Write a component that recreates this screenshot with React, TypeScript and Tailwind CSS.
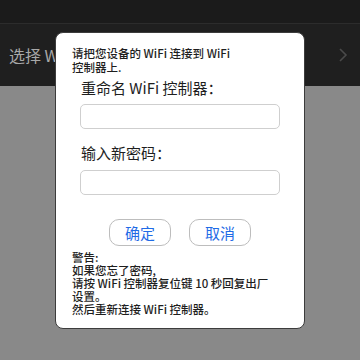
import React from 'react';

const font = { fontFamily: '"Noto Sans CJK SC", "Noto Sans", sans-serif' };

const App: React.FC = () => {
    return (
        <div className="relative w-[360px] h-[360px] overflow-hidden bg-[#898989]" style={font}>
            {/* Header (cut off at top) */}
            <div className="h-[24px] bg-[#1b1b1b] border-b border-[#2c2c2c] overflow-hidden flex items-start gap-[44px] px-[8px]">
                <span className="text-[16px] leading-[16px] -mt-[19px] text-[#8a8a8a]">设置</span>
                <span className="text-[16px] leading-[16px] -mt-[19px] text-[#8a8a8a]">连接控制器网络设置</span>
            </div>

            {/* Row behind dialog */}
            <div className="h-[62px] bg-[#1f1f1f] flex items-center justify-between pl-[9px] pr-[12px]">
                <span className="text-[16px] text-[#a8a8a8]">选择 WiFi 控制器</span>
                <svg width="10" height="16" viewBox="0 0 10 16" fill="none">
                    <path d="M2 2l6 6-6 6" stroke="#4a4a4a" strokeWidth="1.6" />
                </svg>
            </div>

            {/* Dialog */}
            <div className="absolute left-[55px] top-[32px] w-[250px] h-[297px] bg-white border-[1.5px] border-[#3c3c3c] rounded-[8px] flex flex-col pl-[16px] pt-[13px] text-[#1e1e1e]">
                <p className="text-[11.5px] leading-[14px] font-medium">
                    请把您设备的 WiFi 连接到 WiFi<br />控制器上.
                </p>

                <label className="ml-[9px] mt-[4px] text-[15px] leading-[20px]">重命名 WiFi 控制器：</label>
                <input className="ml-[8px] mt-[6px] w-[200px] h-[25px] border border-[#cfcfcf] rounded-[5px] bg-white outline-none" />

                <label className="ml-[9px] mt-[14px] text-[15px] leading-[20px]">输入新密码：</label>
                <input className="ml-[8px] mt-[7px] w-[200px] h-[25px] border border-[#cfcfcf] rounded-[5px] bg-white outline-none" />

                <div className="flex gap-[18px] ml-[37px] mt-[24px]">
                    <button className="w-[62px] h-[27px] border border-[#bdbdbd] rounded-[10px] text-[15px] leading-[20px] text-[#1f6be6] bg-white">确定</button>
                    <button className="w-[62px] h-[27px] border border-[#bdbdbd] rounded-[10px] text-[15px] leading-[20px] text-[#1f6be6] bg-white">取消</button>
                </div>

                <p className="mt-[5px] text-[11.5px] leading-[13px] font-medium">
                    警告:<br />
                    如果您忘了密码,<br />
                    请按 WiFi 控制器复位键 10 秒回复出厂<br />
                    设置。<br />
                    然后重新连接 WiFi 控制器。
                </p>
            </div>
        </div>
    );
};

export default App;
